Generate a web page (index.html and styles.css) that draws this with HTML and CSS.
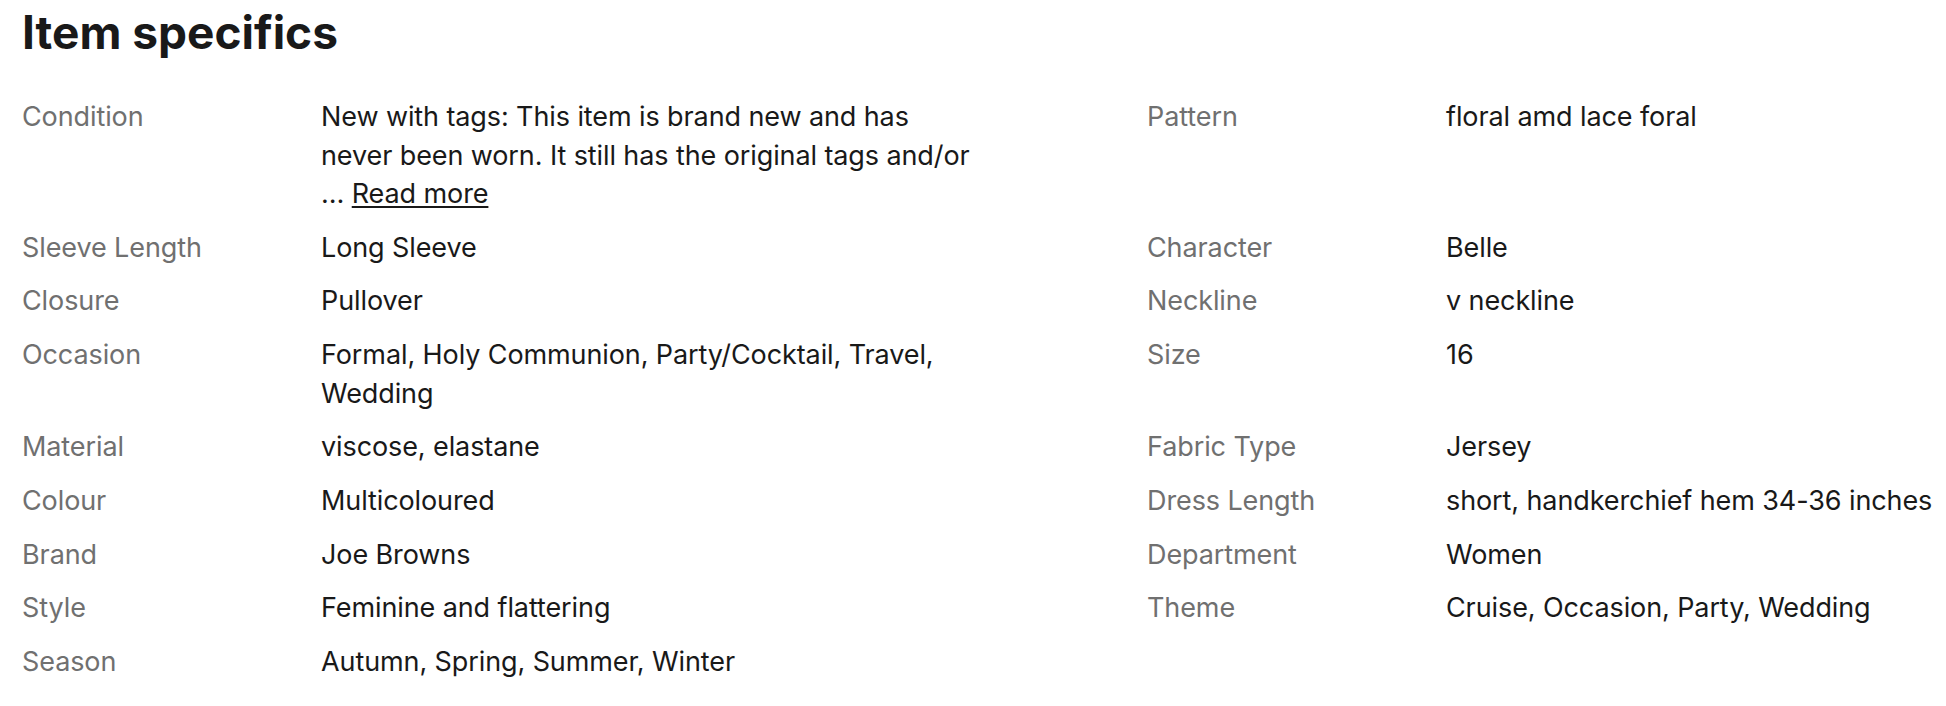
FILE: index.html
```html
<!DOCTYPE html>
<html lang="en">
<head>
<meta charset="utf-8">
<title>Item specifics</title>
<link rel="stylesheet" href="styles.css">
</head>
<body>
<section class="specs">
  <h2 class="specs__title">Item specifics</h2>
  <dl class="specs__grid">
    <dt class="specs__label">Condition</dt>
    <dd class="specs__value specs__value--left">New with tags: This item is brand new and has<br>never been worn. It still has the original tags and/or<br>… <a class="specs__more" href="#">Read more</a></dd>
    <dt class="specs__label">Pattern</dt>
    <dd class="specs__value">floral amd lace foral</dd>

    <dt class="specs__label">Sleeve Length</dt>
    <dd class="specs__value specs__value--left">Long Sleeve</dd>
    <dt class="specs__label">Character</dt>
    <dd class="specs__value">Belle</dd>

    <dt class="specs__label">Closure</dt>
    <dd class="specs__value specs__value--left">Pullover</dd>
    <dt class="specs__label">Neckline</dt>
    <dd class="specs__value">v neckline</dd>

    <dt class="specs__label">Occasion</dt>
    <dd class="specs__value specs__value--left">Formal, Holy Communion, Party/Cocktail, Travel, Wedding</dd>
    <dt class="specs__label">Size</dt>
    <dd class="specs__value">16</dd>

    <dt class="specs__label">Material</dt>
    <dd class="specs__value specs__value--left">viscose, elastane</dd>
    <dt class="specs__label">Fabric Type</dt>
    <dd class="specs__value">Jersey</dd>

    <dt class="specs__label">Colour</dt>
    <dd class="specs__value specs__value--left">Multicoloured</dd>
    <dt class="specs__label">Dress Length</dt>
    <dd class="specs__value">short, handkerchief hem 34-36 inches</dd>

    <dt class="specs__label">Brand</dt>
    <dd class="specs__value specs__value--left">Joe Browns</dd>
    <dt class="specs__label">Department</dt>
    <dd class="specs__value">Women</dd>

    <dt class="specs__label">Style</dt>
    <dd class="specs__value specs__value--left">Feminine and flattering</dd>
    <dt class="specs__label">Theme</dt>
    <dd class="specs__value">Cruise, Occasion, Party, Wedding</dd>

    <dt class="specs__label">Season</dt>
    <dd class="specs__value specs__value--left">Autumn, Spring, Summer, Winter</dd>
  </dl>
</section>
</body>
</html>
```
FILE: styles.css
```css
html, body {
  margin: 0;
  padding: 0;
  background: #ffffff;
}

body {
  font-family: Inter, "Liberation Sans", sans-serif;
  color: #191919;
}

.specs {
  padding: 6px 0 0 22px;
}

.specs__title {
  margin: 0;
  font-size: 46px;
  line-height: 52px;
  font-weight: 700;
  letter-spacing: 0;
  color: #191919;
}

.specs__grid {
  margin: 40px 0 0 0;
  display: grid;
  grid-template-columns: 299px 826px 299px 1fr;
  row-gap: 15.2px;
  font-size: 27px;
  line-height: 38.5px;
  letter-spacing: -0.1px;
}

.specs__label {
  margin: 0;
  color: #707070;
}

.specs__value {
  margin: 0;
  color: #191919;
}

.specs__value--left {
  padding-right: 136px;
}

.specs__more {
  color: #191919;
  text-decoration: underline;
  text-underline-offset: 3px;
}
```
